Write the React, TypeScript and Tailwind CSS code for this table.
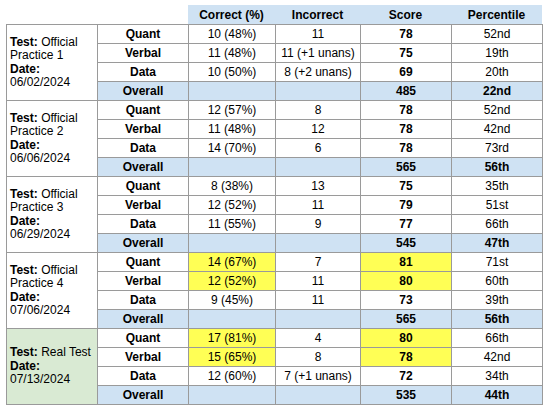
import { FC, Fragment } from "react";

type Row = {
  label: string;
  correct: string;
  incorrect: string;
  score: string;
  pct: string;
  hl?: boolean;
};

type Group = {
  title: [string, string?];
  date: string;
  green?: boolean;
  rows: Row[];
  total: [string, string];
};

const groups: Group[] = [
  {
    title: ["Official", "Practice 1"],
    date: "06/02/2024",
    rows: [
      { label: "Quant", correct: "10 (48%)", incorrect: "11", score: "78", pct: "52nd" },
      { label: "Verbal", correct: "11 (48%)", incorrect: "11 (+1 unans)", score: "75", pct: "19th" },
      { label: "Data", correct: "10 (50%)", incorrect: "8 (+2 unans)", score: "69", pct: "20th" },
    ],
    total: ["485", "22nd"],
  },
  {
    title: ["Official", "Practice 2"],
    date: "06/06/2024",
    rows: [
      { label: "Quant", correct: "12 (57%)", incorrect: "8", score: "78", pct: "52nd" },
      { label: "Verbal", correct: "11 (48%)", incorrect: "12", score: "78", pct: "42nd" },
      { label: "Data", correct: "14 (70%)", incorrect: "6", score: "78", pct: "73rd" },
    ],
    total: ["565", "56th"],
  },
  {
    title: ["Official", "Practice 3"],
    date: "06/29/2024",
    rows: [
      { label: "Quant", correct: "8 (38%)", incorrect: "13", score: "75", pct: "35th" },
      { label: "Verbal", correct: "12 (52%)", incorrect: "11", score: "79", pct: "51st" },
      { label: "Data", correct: "11 (55%)", incorrect: "9", score: "77", pct: "66th" },
    ],
    total: ["545", "47th"],
  },
  {
    title: ["Official", "Practice 4"],
    date: "07/06/2024",
    rows: [
      { label: "Quant", correct: "14 (67%)", incorrect: "7", score: "81", pct: "71st", hl: true },
      { label: "Verbal", correct: "12 (52%)", incorrect: "11", score: "80", pct: "60th", hl: true },
      { label: "Data", correct: "9 (45%)", incorrect: "11", score: "73", pct: "39th" },
    ],
    total: ["565", "56th"],
  },
  {
    title: ["Real Test"],
    date: "07/13/2024",
    green: true,
    rows: [
      { label: "Quant", correct: "17 (81%)", incorrect: "4", score: "80", pct: "66th", hl: true },
      { label: "Verbal", correct: "15 (65%)", incorrect: "8", score: "78", pct: "42nd", hl: true },
      { label: "Data", correct: "12 (60%)", incorrect: "7 (+1 unans)", score: "72", pct: "34th" },
    ],
    total: ["535", "44th"],
  },
];

const cell = "flex items-center justify-center whitespace-nowrap";

const App: FC = () => {
  return (
    <div className="pt-[5px] pl-[6px] bg-white min-h-[410px] text-[12px] text-black font-['Liberation_Sans',Arial,sans-serif]">
      <div className="flex ml-[182px] h-[19px] w-[354px] bg-[#cfe2f3] font-bold">
        <div className={`${cell} w-[87px]`}>Correct (%)</div>
        <div className={`${cell} w-[85px]`}>Incorrect</div>
        <div className={`${cell} w-[91px]`}>Score</div>
        <div className={`${cell} w-[91px]`}>Percentile</div>
      </div>
      <div className="grid w-fit grid-cols-[90px_90px_86px_84px_90px_90px] auto-rows-[18px] gap-px p-px bg-[#9a9a9a]">
        {groups.map((g, gi) => (
          <Fragment key={gi}>
            <div
              className={`row-span-4 flex flex-col justify-center px-[3px] leading-[13.5px] ${
                g.green ? "bg-[#d9ead3]" : "bg-white"
              }`}
            >
              <div className="whitespace-nowrap">
                <span className="font-bold">Test:</span> {g.title[0]}
              </div>
              {g.title[1] && <div>{g.title[1]}</div>}
              <div className="font-bold">Date:</div>
              <div>{g.date}</div>
            </div>
            {g.rows.map((r) => (
              <Fragment key={r.label}>
                <div className={`${cell} bg-white font-bold`}>{r.label}</div>
                <div className={`${cell} ${r.hl ? "bg-[#ffff55]" : "bg-white"}`}>{r.correct}</div>
                <div className={`${cell} bg-white`}>{r.incorrect}</div>
                <div className={`${cell} font-bold ${r.hl ? "bg-[#ffff55]" : "bg-white"}`}>{r.score}</div>
                <div className={`${cell} bg-white`}>{r.pct}</div>
              </Fragment>
            ))}
            <div className={`${cell} bg-[#cfe2f3] font-bold`}>Overall</div>
            <div className="bg-[#cfe2f3]" />
            <div className="bg-[#cfe2f3]" />
            <div className={`${cell} bg-[#cfe2f3] font-bold`}>{g.total[0]}</div>
            <div className={`${cell} bg-[#cfe2f3] font-bold`}>{g.total[1]}</div>
          </Fragment>
        ))}
      </div>
    </div>
  );
};

export default App;
